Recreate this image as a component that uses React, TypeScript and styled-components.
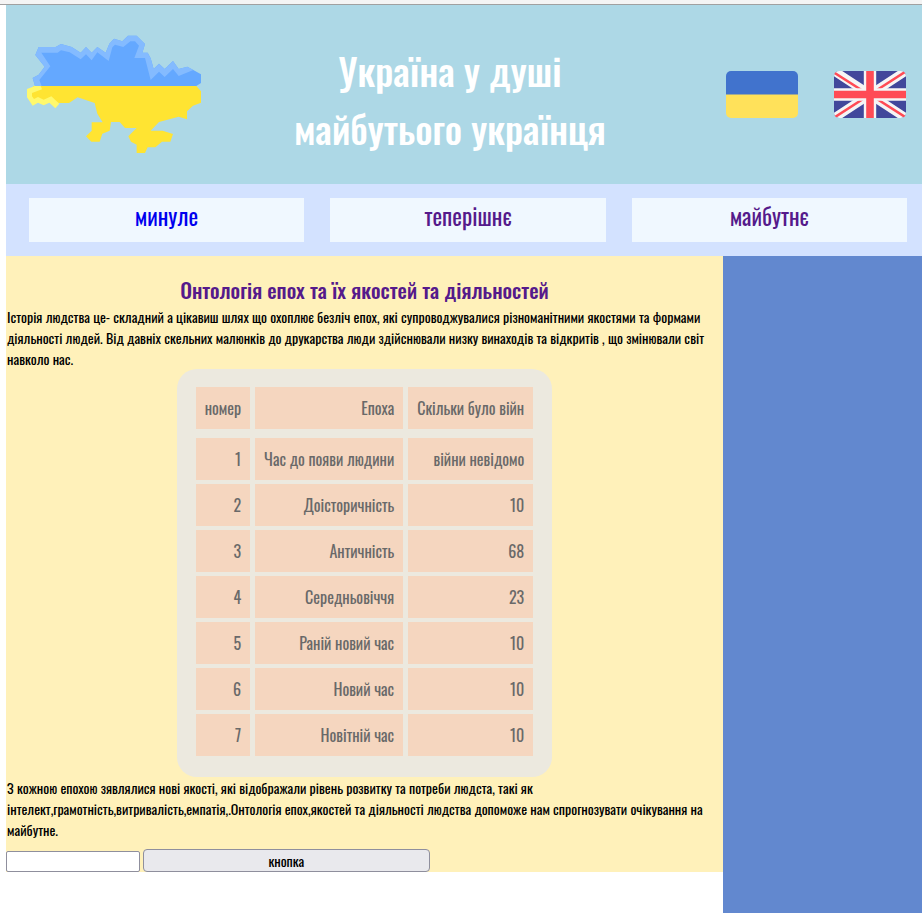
import React from 'react';
import styled, { createGlobalStyle } from 'styled-components';

const GlobalStyle = createGlobalStyle`
  * { box-sizing: border-box; }
  html { background: #ffffff; }
  body {
    margin: 0;
    font-family: Oswald, "Roboto Condensed", sans-serif;
    font-size: 14px;
    font-weight: 400;
    line-height: 21px;
    color: #000000;
  }
`;

const Page = styled.div`
  display: flex;
  flex-direction: column;
  min-height: 100vh;
`;

const TopEdge = styled.div`
  height: 5px;
  background: #f4f4f4;
  border-bottom: 1px solid #a0a0a0;
`;

const Site = styled.div`
  flex: 1;
  display: flex;
  flex-direction: column;
  padding-left: 6px;
`;

const Header = styled.header`
  display: flex;
  align-items: center;
  justify-content: space-between;
  min-height: 179px;
  padding: 0 16px 0 20px;
  background: #add8e6;
`;

const MapPicture = styled.svg`
  width: 176px;
  height: 119px;
  flex: none;
`;

const Title = styled.h1`
  margin: 0 28px 0 0;
  padding-top: 8px;
  max-width: 340px;
  font-size: 38px;
  font-weight: 500;
  line-height: 58px;
  text-align: center;
  color: #ffffff;
`;

const Languages = styled.div`
  display: flex;
  gap: 36px;
`;

const LanguageButton = styled.button`
  display: block;
  padding: 0;
  border: 0;
  background: none;
  cursor: pointer;
`;

const Flag = styled.svg`
  display: block;
  width: 72px;
  height: 47px;
`;

const Nav = styled.nav`
  display: grid;
  grid-template-columns: repeat(3, 1fr);
  gap: 26px;
  padding: 14px 15px 14px 23px;
  background: #d3e2ff;
`;

const NavLink = styled.a<{ $visited?: boolean }>`
  height: 44px;
  background: #f0f8ff;
  color: ${(p) => (p.$visited ? '#551a8b' : '#0000ee')};
  font-size: 23px;
  font-weight: 400;
  line-height: 36px;
  text-align: center;
  text-decoration: none;
`;

const Columns = styled.div`
  flex: 1;
  display: grid;
  grid-template-columns: 18fr 5fr;
`;

const Main = styled.main`
  align-self: start;
  padding-top: 18px;
  background: #fff1ba;
`;

const Heading = styled.h2`
  margin: 0;
  font-size: 21px;
  font-weight: 500;
  line-height: 32px;
  text-align: center;
`;

const HeadingLink = styled.a`
  color: #551a8b;
  text-decoration: none;
`;

const Paragraph = styled.p`
  margin: 0;
  padding-left: 1px;
`;

const Epochs = styled.table`
  margin: 0 auto;
  padding: 14px 14px 17px;
  border-spacing: 5px 4px;
  border-radius: 20px;
  background: #ece9df;
  color: #696969;
  font-size: 16px;
  line-height: 24px;

  thead::after {
    content: '';
    display: table-row;
    height: 1px;
  }
`;

const Cell = styled.td`
  padding: 9px;
  background: #f5d6bf;
  font-weight: 400;
  text-align: right;
`;

const Form = styled.form`
  display: flex;
  align-items: flex-end;
  gap: 3px;
  margin-top: 9px;
`;

const TextBox = styled.input`
  width: 134px;
  height: 21px;
  border: 1px solid #8f8f9d;
  border-radius: 2px;
  background: #ffffff;
  font: inherit;
`;

const Submit = styled.button`
  width: 40%;
  height: 23px;
  padding: 0;
  border: 1px solid #8f8f9d;
  border-radius: 4px;
  background: #e9e9ed;
  color: #000000;
  font: inherit;
`;

const Aside = styled.aside`
  background: #6288cf;
`;

const epochs = [
  ['Час до появи людини', 'війни невідомо'],
  ['Доісторичність', '10'],
  ['Античність', '68'],
  ['Середньовіччя', '23'],
  ['Раній новий час', '10'],
  ['Новий час', '10'],
  ['Новітній час', '10'],
];

const UkraineMap = () => (
  <MapPicture viewBox="78 105 528 357" role="img" aria-label="Мапа України">
    <path fill="#64a8ff" d="M105 258 98 234 116 224 134 200 106 165 116 141H167L183 132 215 141 242 158 258 141 275 158 292 141 317 158 328 131 342 116 367 124 384 107H410L435 132 427 158H443L452 175 461 207 477 191 494 207 519 183 536 207 562 200 603 223V249L589 258Z" />
    <path fill="#84bbff" d="M105 258 98 234 116 224 134 200 106 165 116 141H167L183 132 215 141 242 158 258 141 275 158 292 141 317 158 328 131 342 116 367 124 384 107H410L435 132 427 158H443L452 175 461 207 477 191 494 207 519 183 536 207 562 200 580 210 536 228 519 207 494 231 477 215 452 240 435 174H403L417 137 405 124H391L370 141 345 134 337 142 326 183 292 157 275 181 258 163 242 178 209 157 183 151 173 158H124L151 199 118 240 125 258Z" />
    <path fill="#ffe432" d="M100 258H589L603 274V308L579 317 561 334V358L536 350 477 366 452 392H488L519 402 511 425H486L466 442H443L435 459H410V434L393 425 385 409 410 384H375L359 366H333L329 392 307 401 299 425H274L258 409 275 392V367H308L292 341 284 309 233 292 207 309H178L150 306 95 300 92 275Z" />
    <path fill="#fff96d" d="M105 258 81 267V292L98 317 114 308 131 316 148 308 166 325 178 311 154 289 131 299 114 291 102 297 96 289V279L126 268 122 258Z" />
  </MapPicture>
);

const UkraineFlag = () => (
  <Flag viewBox="0 0 72 47" aria-hidden="true">
    <clipPath id="ua-shape"><rect width="72" height="47" rx="5" /></clipPath>
    <g clipPath="url(#ua-shape)">
      <rect width="72" height="24" fill="#4173cd" />
      <rect y="23.5" width="72" height="24" fill="#ffe15a" />
    </g>
  </Flag>
);

const BritishFlag = () => (
  <Flag viewBox="0 0 72 47" aria-hidden="true">
    <clipPath id="gb-shape"><rect width="72" height="47" rx="5" /></clipPath>
    <g clipPath="url(#gb-shape)">
      <rect width="72" height="47" fill="#41479b" />
      <path d="M0 0 72 47M72 0 0 47" stroke="#f5f5f5" strokeWidth="9" />
      <path d="M0 1.5 29 20M71 1 43 19M29 28 1 46M43 28 72 46.5" stroke="#ff4b55" strokeWidth="2.6" />
      <path d="M36 0V47M0 23.5H72" stroke="#f5f5f5" strokeWidth="12.4" />
      <path d="M36 0V47M0 23.5H72" stroke="#ff4b55" strokeWidth="7.6" />
    </g>
  </Flag>
);

export default function App() {
  return (
    <Page>
      <GlobalStyle />
      <TopEdge />
      <Site>
        <Header>
          <UkraineMap />
          <Title>Україна у душі майбутього українця</Title>
          <Languages>
            <LanguageButton type="button" aria-label="Українська"><UkraineFlag /></LanguageButton>
            <LanguageButton type="button" aria-label="English"><BritishFlag /></LanguageButton>
          </Languages>
        </Header>
        <Nav>
          <NavLink href="#past">минуле</NavLink>
          <NavLink href="#present" $visited>теперішнє</NavLink>
          <NavLink href="#future" $visited>майбутнє</NavLink>
        </Nav>
        <Columns>
          <Main>
            <Heading>
              <HeadingLink href="#ontology">Онтологія епох та їх якостей та діяльностей</HeadingLink>
            </Heading>
            <Paragraph>
              Історія людства це- складний а цікавиш шлях що охоплює безліч епох, які супроводжувалися
              різноманітними якостями та формами діяльності людей. Від давніх скельних малюнків до
              друкарства люди здійснювали низку винаходів та відкритів , що змінювали світ навколо нас.
            </Paragraph>
            <Epochs>
              <thead>
                <tr>
                  <Cell as="th" scope="col">номер</Cell>
                  <Cell as="th" scope="col">Епоха</Cell>
                  <Cell as="th" scope="col">Скільки було війн</Cell>
                </tr>
              </thead>
              <tbody>
                {epochs.map(([name, wars], i) => (
                  <tr key={name}>
                    <Cell>{i + 1}</Cell>
                    <Cell>{name}</Cell>
                    <Cell>{wars}</Cell>
                  </tr>
                ))}
              </tbody>
            </Epochs>
            <Paragraph>
              З кожною епохою зявлялися нові якості, які відображали рівень розвитку та потреби людста,
              такі як інтелект,грамотність,витривалість,емпатія,.Онтологія епох,якостей та діяльності
              людства допоможе нам спрогнозувати очікування на майбутне.
            </Paragraph>
            <Form onSubmit={(e) => e.preventDefault()}>
              <TextBox type="text" aria-label="Відповідь" />
              <Submit type="submit">кнопка</Submit>
            </Form>
          </Main>
          <Aside />
        </Columns>
      </Site>
    </Page>
  );
}
